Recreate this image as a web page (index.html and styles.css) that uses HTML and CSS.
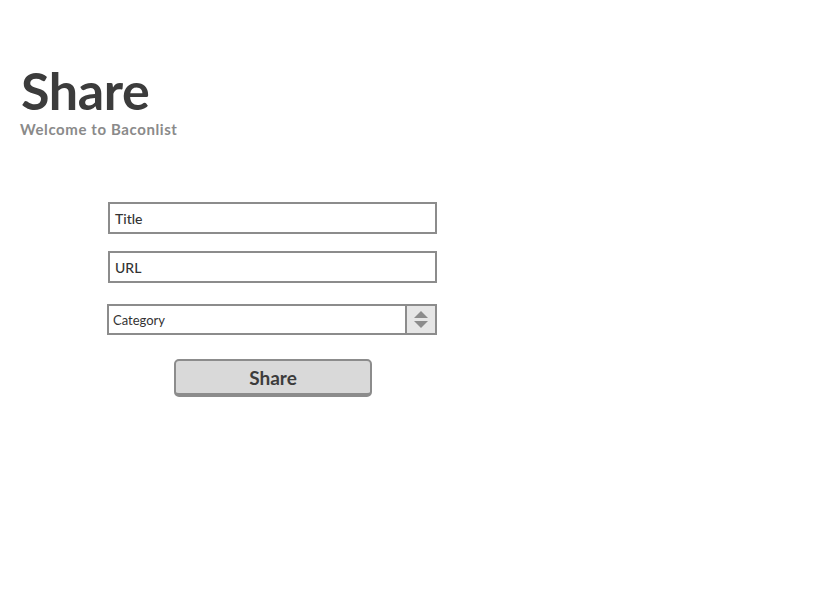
FILE: index.html
```html
<!DOCTYPE html>
<html>
<head>
<meta charset="utf-8">
<link rel="stylesheet" href="styles.css">
</head>
<body>
<header class="header">
  <h1 class="title">Share</h1>
  <p class="subtitle">Welcome to Baconlist</p>
</header>
<form class="form">
  <div class="field"><span>Title</span></div>
  <div class="field"><span>URL</span></div>
  <div class="select">
    <span class="select-label">Category</span>
    <span class="select-arrows">
      <svg width="16" height="20" viewBox="0 0 16 20"><path d="M8 1 L15 8 L1 8 Z" fill="#8c8c8c"/><path d="M1 11 L15 11 L8 18 Z" fill="#8c8c8c"/></svg>
    </span>
  </div>
  <div class="actions"><button type="button" class="btn">Share</button></div>
</form>
</body>
</html>
```
FILE: styles.css
```css
html, body { margin: 0; padding: 0; background: #fff; }
body { font-family: Lato, "Open Sans", sans-serif; color: #333; }
.header { padding: 62px 0 0 20px; }
.title { margin: 0 0 0 1px; font-size: 52px; font-weight: 700; line-height: 56px; color: #3c3c3c; letter-spacing: -0.4px; }
.subtitle { margin: 2px 0 0 0; font-size: 15px; font-weight: 700; color: #8a8a8a; line-height: 18px; letter-spacing: 0.6px; }
.form { margin: 64px 0 0 107px; width: 330px; display: flex; flex-direction: column; }
.field { margin-left: 1px; height: 32px; box-sizing: border-box; border: 2px solid #8c8c8c; background: #fff; display: flex; align-items: center; padding-left: 5px; font-size: 14px; font-weight: 500; color: #333; margin-bottom: 17px; }
.select { margin-top: 4px; height: 31px; box-sizing: border-box; border: 2px solid #8c8c8c; display: flex; align-items: stretch; font-size: 13px; color: #333; }
.select-label { flex: 1; display: flex; align-items: center; padding-left: 4px; }
.select-arrows { width: 28px; background: #e6e6e6; border-left: 2px solid #8c8c8c; display: flex; align-items: center; justify-content: center; }
.actions { display: flex; padding-left: 67px; margin-top: 24px; }
.btn { width: 198px; height: 38px; box-sizing: border-box; border: 2px solid #8c8c8c; border-bottom-width: 4px; border-radius: 5px; background: #d9d9d9; font-family: Lato, "Open Sans", sans-serif; font-size: 19px; font-weight: 700; color: #3c3c3c; padding: 0; }
```
